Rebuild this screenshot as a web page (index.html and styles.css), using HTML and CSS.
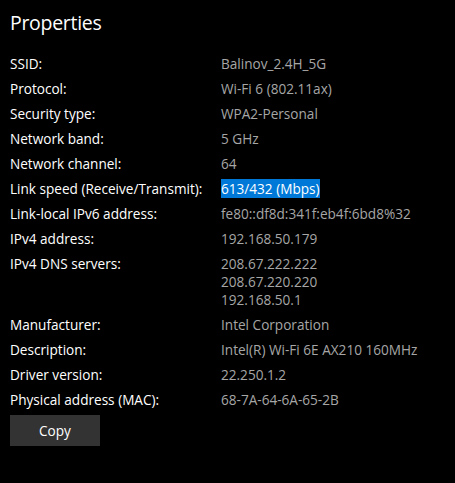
FILE: index.html
```html
<!DOCTYPE html>
<html>
<head>
<meta charset="utf-8">
<link rel="stylesheet" href="styles.css">
</head>
<body>
<div class="page">
  <h1 class="title">Properties</h1>
  <div class="props">
    <div class="label">SSID:</div><div class="value">Balinov_2.4H_5G</div>
    <div class="label">Protocol:</div><div class="value">Wi-Fi 6 (802.11ax)</div>
    <div class="label">Security type:</div><div class="value">WPA2-Personal</div>
    <div class="label">Network band:</div><div class="value">5 GHz</div>
    <div class="label">Network channel:</div><div class="value">64</div>
    <div class="label">Link speed (Receive/Transmit):</div><div class="value"><span class="sel">613/432 (Mbps)</span></div>
    <div class="label">Link-local IPv6 address:</div><div class="value">fe80::df8d:341f:eb4f:6bd8%32</div>
    <div class="label">IPv4 address:</div><div class="value">192.168.50.179</div>
    <div class="label">IPv4 DNS servers:</div><div class="value">208.67.222.222<br>208.67.220.220<br>192.168.50.1</div>
    <div class="label">Manufacturer:</div><div class="value">Intel Corporation</div>
    <div class="label">Description:</div><div class="value">Intel(R) Wi-Fi 6E AX210 160MHz</div>
    <div class="label">Driver version:</div><div class="value">22.250.1.2</div>
    <div class="label">Physical address (MAC):</div><div class="value">68-7A-64-6A-65-2B</div>
  </div>
  <button class="copy">Copy</button>
</div>
</body>
</html>
```
FILE: styles.css
```css
html, body {
  margin: 0;
  background: #000;
}
.page {
  padding: 9px 10px 0 10px;
  font-family: "Open Sans", "Noto Sans", sans-serif;
  color: #fff;
}
.title {
  margin: 0;
  font-size: 19.5px;
  font-weight: 400;
  line-height: 28px;
  letter-spacing: -0.3px;
}
.props {
  margin-top: 18px;
  display: grid;
  grid-template-columns: 211px 1fr;
  row-gap: 7px;
  font-size: 13.6px;
  line-height: 18px;
}
.label {
  color: #fff;
}
.value {
  color: #a6a6a6;
}
.sel {
  background: #0078d7;
  color: #fff;
}
.copy {
  margin-top: 6px;
  width: 90px;
  height: 31px;
  border: none;
  background: #333;
  color: #fff;
  font-family: "Open Sans", "Noto Sans", sans-serif;
  font-size: 13.6px;
  padding: 0;
}
```
